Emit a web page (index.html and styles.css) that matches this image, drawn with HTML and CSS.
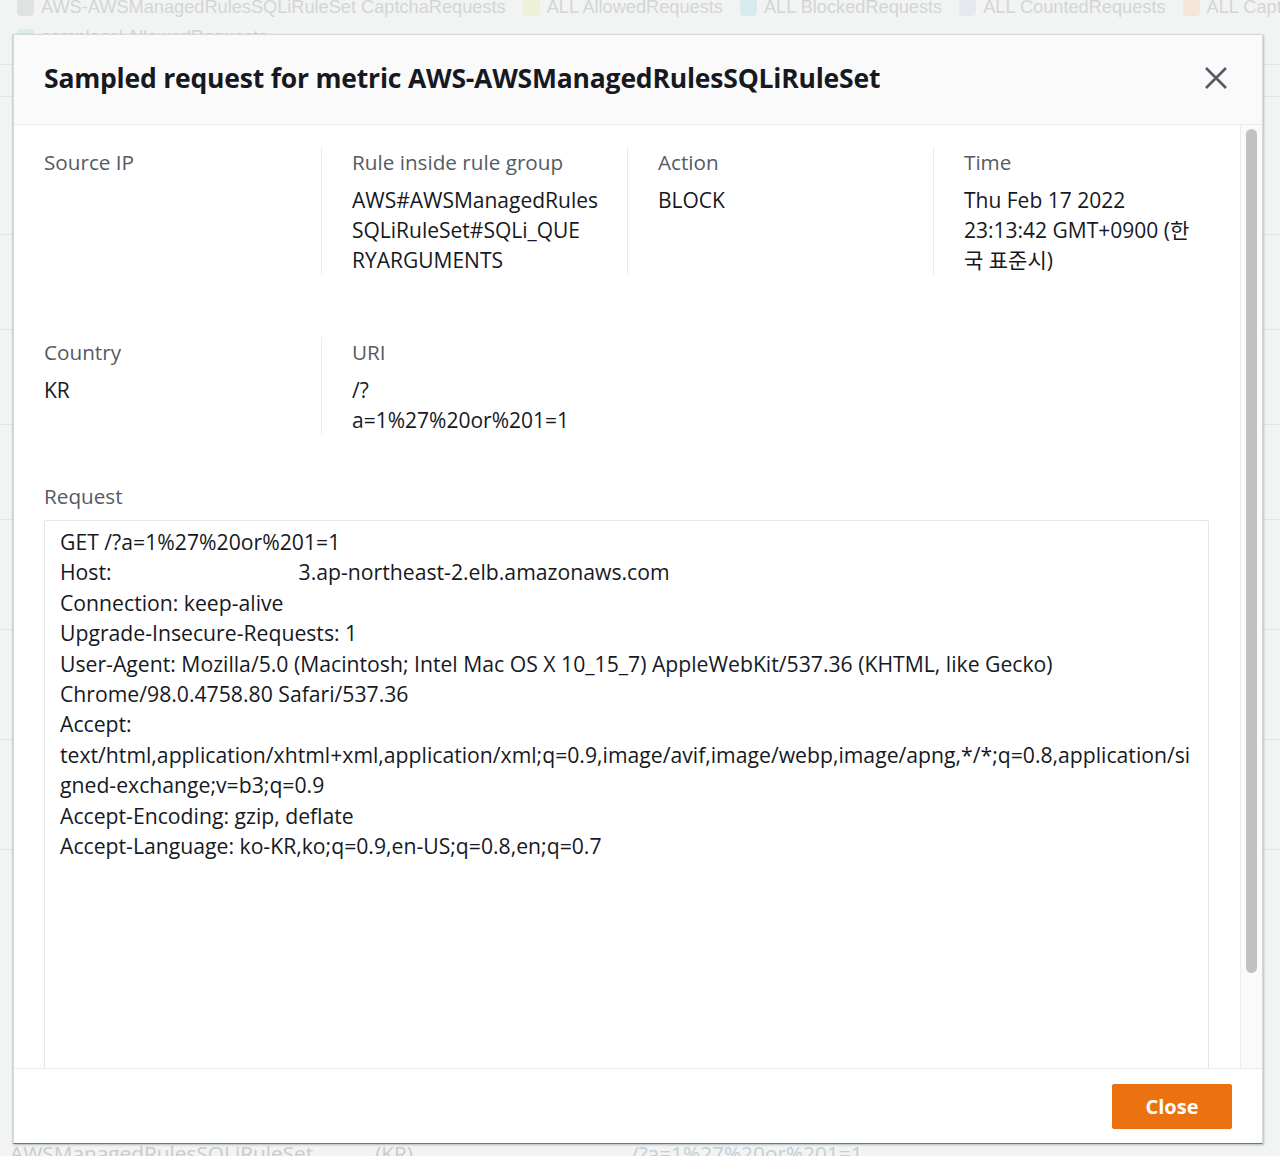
FILE: index.html
```html
<!DOCTYPE html>
<html lang="en">
<head>
<meta charset="utf-8">
<title>Sampled request</title>
<link rel="stylesheet" href="styles.css">
</head>
<body>
<div class="page" aria-hidden="true">
  <div class="legend">
    <div class="legend-row">
      <span class="legend-item"><span class="swatch sw-gray"></span>AWS-AWSManagedRulesSQLiRuleSet CaptchaRequests</span>
      <span class="legend-item"><span class="swatch sw-yellow"></span>ALL AllowedRequests</span>
      <span class="legend-item"><span class="swatch sw-cyan"></span>ALL BlockedRequests</span>
      <span class="legend-item"><span class="swatch sw-lav"></span>ALL CountedRequests</span>
      <span class="legend-item"><span class="swatch sw-peach"></span>ALL CaptchaRequests</span>
    </div>
    <div class="legend-row">
      <span class="legend-item"><span class="swatch sw-green"></span>sampleacl AllowedRequests</span>
    </div>
  </div>
  <div class="bg-rows">
    <div class="bg-row r1"></div>
    <div class="bg-row r2"></div>
    <div class="bg-row r3"></div>
    <div class="bg-row r4"></div>
    <div class="bg-row r4"></div>
    <div class="bg-row r5"></div>
    <div class="bg-row r5"></div>
    <div class="bg-row r6"></div>
  </div>
  <div class="bg-last"><span class="bg-name">AWSManagedRulesSQLiRuleSet</span><span class="bg-kr">(KR)</span><span class="bg-link">/?a=1%27%20or%201=1</span></div>
</div>

<div class="modal" role="dialog" aria-labelledby="modal-title">
  <header class="modal-head">
    <h2 id="modal-title">Sampled request for metric AWS-AWSManagedRulesSQLiRuleSet</h2>
    <button class="close-x" aria-label="Close">
      <svg width="24" height="24" viewBox="0 0 24 24"><path d="M2 2 L22 22 M22 2 L2 22" fill="none" stroke="#545b64" stroke-width="2.6" stroke-linecap="butt"/></svg>
    </button>
  </header>
  <div class="modal-body">
    <div class="content">
      <div class="fields">
        <div class="field">
          <div class="label">Source IP</div>
        </div>
        <div class="field divided">
          <div class="label">Rule inside rule group</div>
          <div class="value">AWS#AWSManagedRules<br>SQLiRuleSet#SQLi_QUE<br>RYARGUMENTS</div>
        </div>
        <div class="field divided">
          <div class="label">Action</div>
          <div class="value">BLOCK</div>
        </div>
        <div class="field divided">
          <div class="label">Time</div>
          <div class="value">Thu Feb 17 2022<br>23:13:42 GMT+0900 (한<br>국 표준시)</div>
        </div>
      </div>
      <div class="fields second">
        <div class="field">
          <div class="label">Country</div>
          <div class="value">KR</div>
        </div>
        <div class="field divided">
          <div class="label">URI</div>
          <div class="value">/?<br>a=1%27%20or%201=1</div>
        </div>
      </div>
      <div class="label request-label">Request</div>
      <div class="request-box"><div>GET /?a=1%27%20or%201=1</div><div>Host:<span class="redacted"></span>3.ap-northeast-2.elb.amazonaws.com</div><div>Connection: keep-alive</div><div>Upgrade-Insecure-Requests: 1</div><div>User-Agent: Mozilla/5.0 (Macintosh; Intel Mac OS X 10_15_7) AppleWebKit/537.36 (KHTML, like Gecko)</div><div>Chrome/98.0.4758.80 Safari/537.36</div><div>Accept:</div><div>text/html,application/xhtml+xml,application/xml;q=0.9,image/avif,image/webp,image/apng,*/*;q=0.8,application/si</div><div>gned-exchange;v=b3;q=0.9</div><div>Accept-Encoding: gzip, deflate</div><div>Accept-Language: ko-KR,ko;q=0.9,en-US;q=0.8,en;q=0.7</div></div>
    </div>
    <div class="scrollbar"><div class="thumb"></div></div>
  </div>
  <footer class="modal-foot">
    <button class="btn-primary">Close</button>
  </footer>
</div>
</body>
</html>
```
FILE: styles.css
```css
* { box-sizing: border-box; }

html, body {
  margin: 0;
  padding: 0;
}

body {
  width: 1280px;
  height: 1156px;
  overflow: hidden;
  position: relative;
  background: #f2f3f3;
  font-family: "Open Sans", "Noto Sans CJK KR", sans-serif;
  color: #16191f;
}

/* ---------- background page (dimmed) ---------- */
.page {
  height: 1156px;
  display: flex;
  flex-direction: column;
  color: #d2d6d6;
  font-family: "Liberation Sans", Arial, sans-serif;
}

.legend {
  margin-top: -8px;
  padding-left: 17px;
  font-size: 18.2px;
  line-height: 30px;
}

.legend-row {
  display: flex;
  gap: 17px;
  white-space: nowrap;
}

.legend-item {
  display: flex;
  align-items: center;
  gap: 7px;
}

.swatch {
  width: 17px;
  height: 17px;
  border-radius: 4px;
  display: inline-block;
}
.sw-gray { background: #e0e1e1; }
.sw-yellow { background: #eef0d8; }
.sw-cyan { background: #d7ecef; }
.sw-lav { background: #e5e9ee; }
.sw-peach { background: #f6e6d8; }
.sw-green { background: #dcefdc; }

.bg-rows {
  margin-top: 12px;
  border-top: 1px solid #e4e6e6;
}

.bg-row {
  border-bottom: 1px solid #e4e6e6;
}
.r1 { height: 32px; }
.r2 { height: 138px; }
.r3 { height: 95px; }
.r4 { height: 95px; }
.r5 { height: 110px; }
.r6 { height: 110px; }

.bg-last {
  margin-top: auto;
  flex: none;
  height: 18px;
  display: flex;
  align-items: flex-start;
  padding-left: 10px;
  font-family: "Open Sans", sans-serif;
  font-size: 20.8px;
  line-height: 30px;
  color: #c8cccc;
  white-space: nowrap;
}
.bg-kr { margin-left: 62px; }
.bg-link { margin-left: 218px; color: #c4ced8; }

/* ---------- modal ---------- */
.modal {
  position: absolute;
  left: 13px;
  top: 34px;
  width: 1250px;
  height: 1110px;
  display: flex;
  flex-direction: column;
  background: #ffffff;
  border: 1px solid #d5dbdb;
  border-bottom-color: #6b757d;
  box-shadow: 1px 1px 2px rgba(0, 28, 36, 0.25), -1px 0 1px rgba(0, 28, 36, 0.12);
}

.modal-head {
  height: 90px;
  flex: none;
  display: flex;
  align-items: center;
  justify-content: space-between;
  padding: 0 34px 3px 30px;
  background: #fafafa;
  border-bottom: 1px solid #eaeded;
}

.modal-head h2 {
  margin: 0;
  font-size: 26.5px;
  font-weight: 700;
  letter-spacing: -0.2px;
  color: #16191f;
}

.close-x {
  border: 0;
  background: transparent;
  padding: 0;
  width: 24px;
  height: 24px;
  display: flex;
  cursor: pointer;
}

.modal-body {
  flex: 1;
  min-height: 0;
  display: flex;
  overflow: hidden;
}

.content {
  flex: 1;
  min-width: 0;
  overflow: hidden;
  padding: 22px 31px 0 30px;
}

.fields {
  display: grid;
  grid-template-columns: 277px 306px 306px 1fr;
}

.fields.second {
  margin-top: 62px;
}

.field {
  min-width: 0;
}

.field.divided {
  border-left: 1px solid #eaeded;
  padding-left: 30px;
}

.label {
  font-size: 20.7px;
  line-height: 30px;
  color: #545b64;
}

.value {
  margin-top: 8px;
  font-size: 21px;
  line-height: 30px;
  color: #16191f;
  white-space: nowrap;
}

.request-label {
  margin-top: 46px;
}

.request-box {
  margin-top: 9px;
  height: 620px;
  border: 1px solid #e4e7e7;
  border-radius: 2px;
  padding: 6px 15px;
  font-size: 21.2px;
  line-height: 30.4px;
  color: #16191f;
  white-space: pre;
}

.redacted {
  display: inline-block;
  width: 187px;
}

.scrollbar {
  flex: none;
  width: 22px;
  background: #fafafa;
  border-left: 1px solid #eaeded;
  padding: 4px 0 0 5px;
}

.thumb {
  width: 11px;
  height: 844px;
  border-radius: 6px;
  background: #c1c1c1;
}

.modal-foot {
  height: 75px;
  flex: none;
  border-top: 1px solid #eaeded;
  display: flex;
  justify-content: flex-end;
  align-items: center;
  padding-right: 30px;
}

.btn-primary {
  width: 120px;
  height: 45px;
  background: #ec7211;
  border: 1px solid #eb6f0a;
  border-radius: 2px;
  color: #ffffff;
  font-family: "Open Sans", sans-serif;
  font-size: 20px;
  font-weight: 700;
  padding: 0;
  cursor: pointer;
}
```
